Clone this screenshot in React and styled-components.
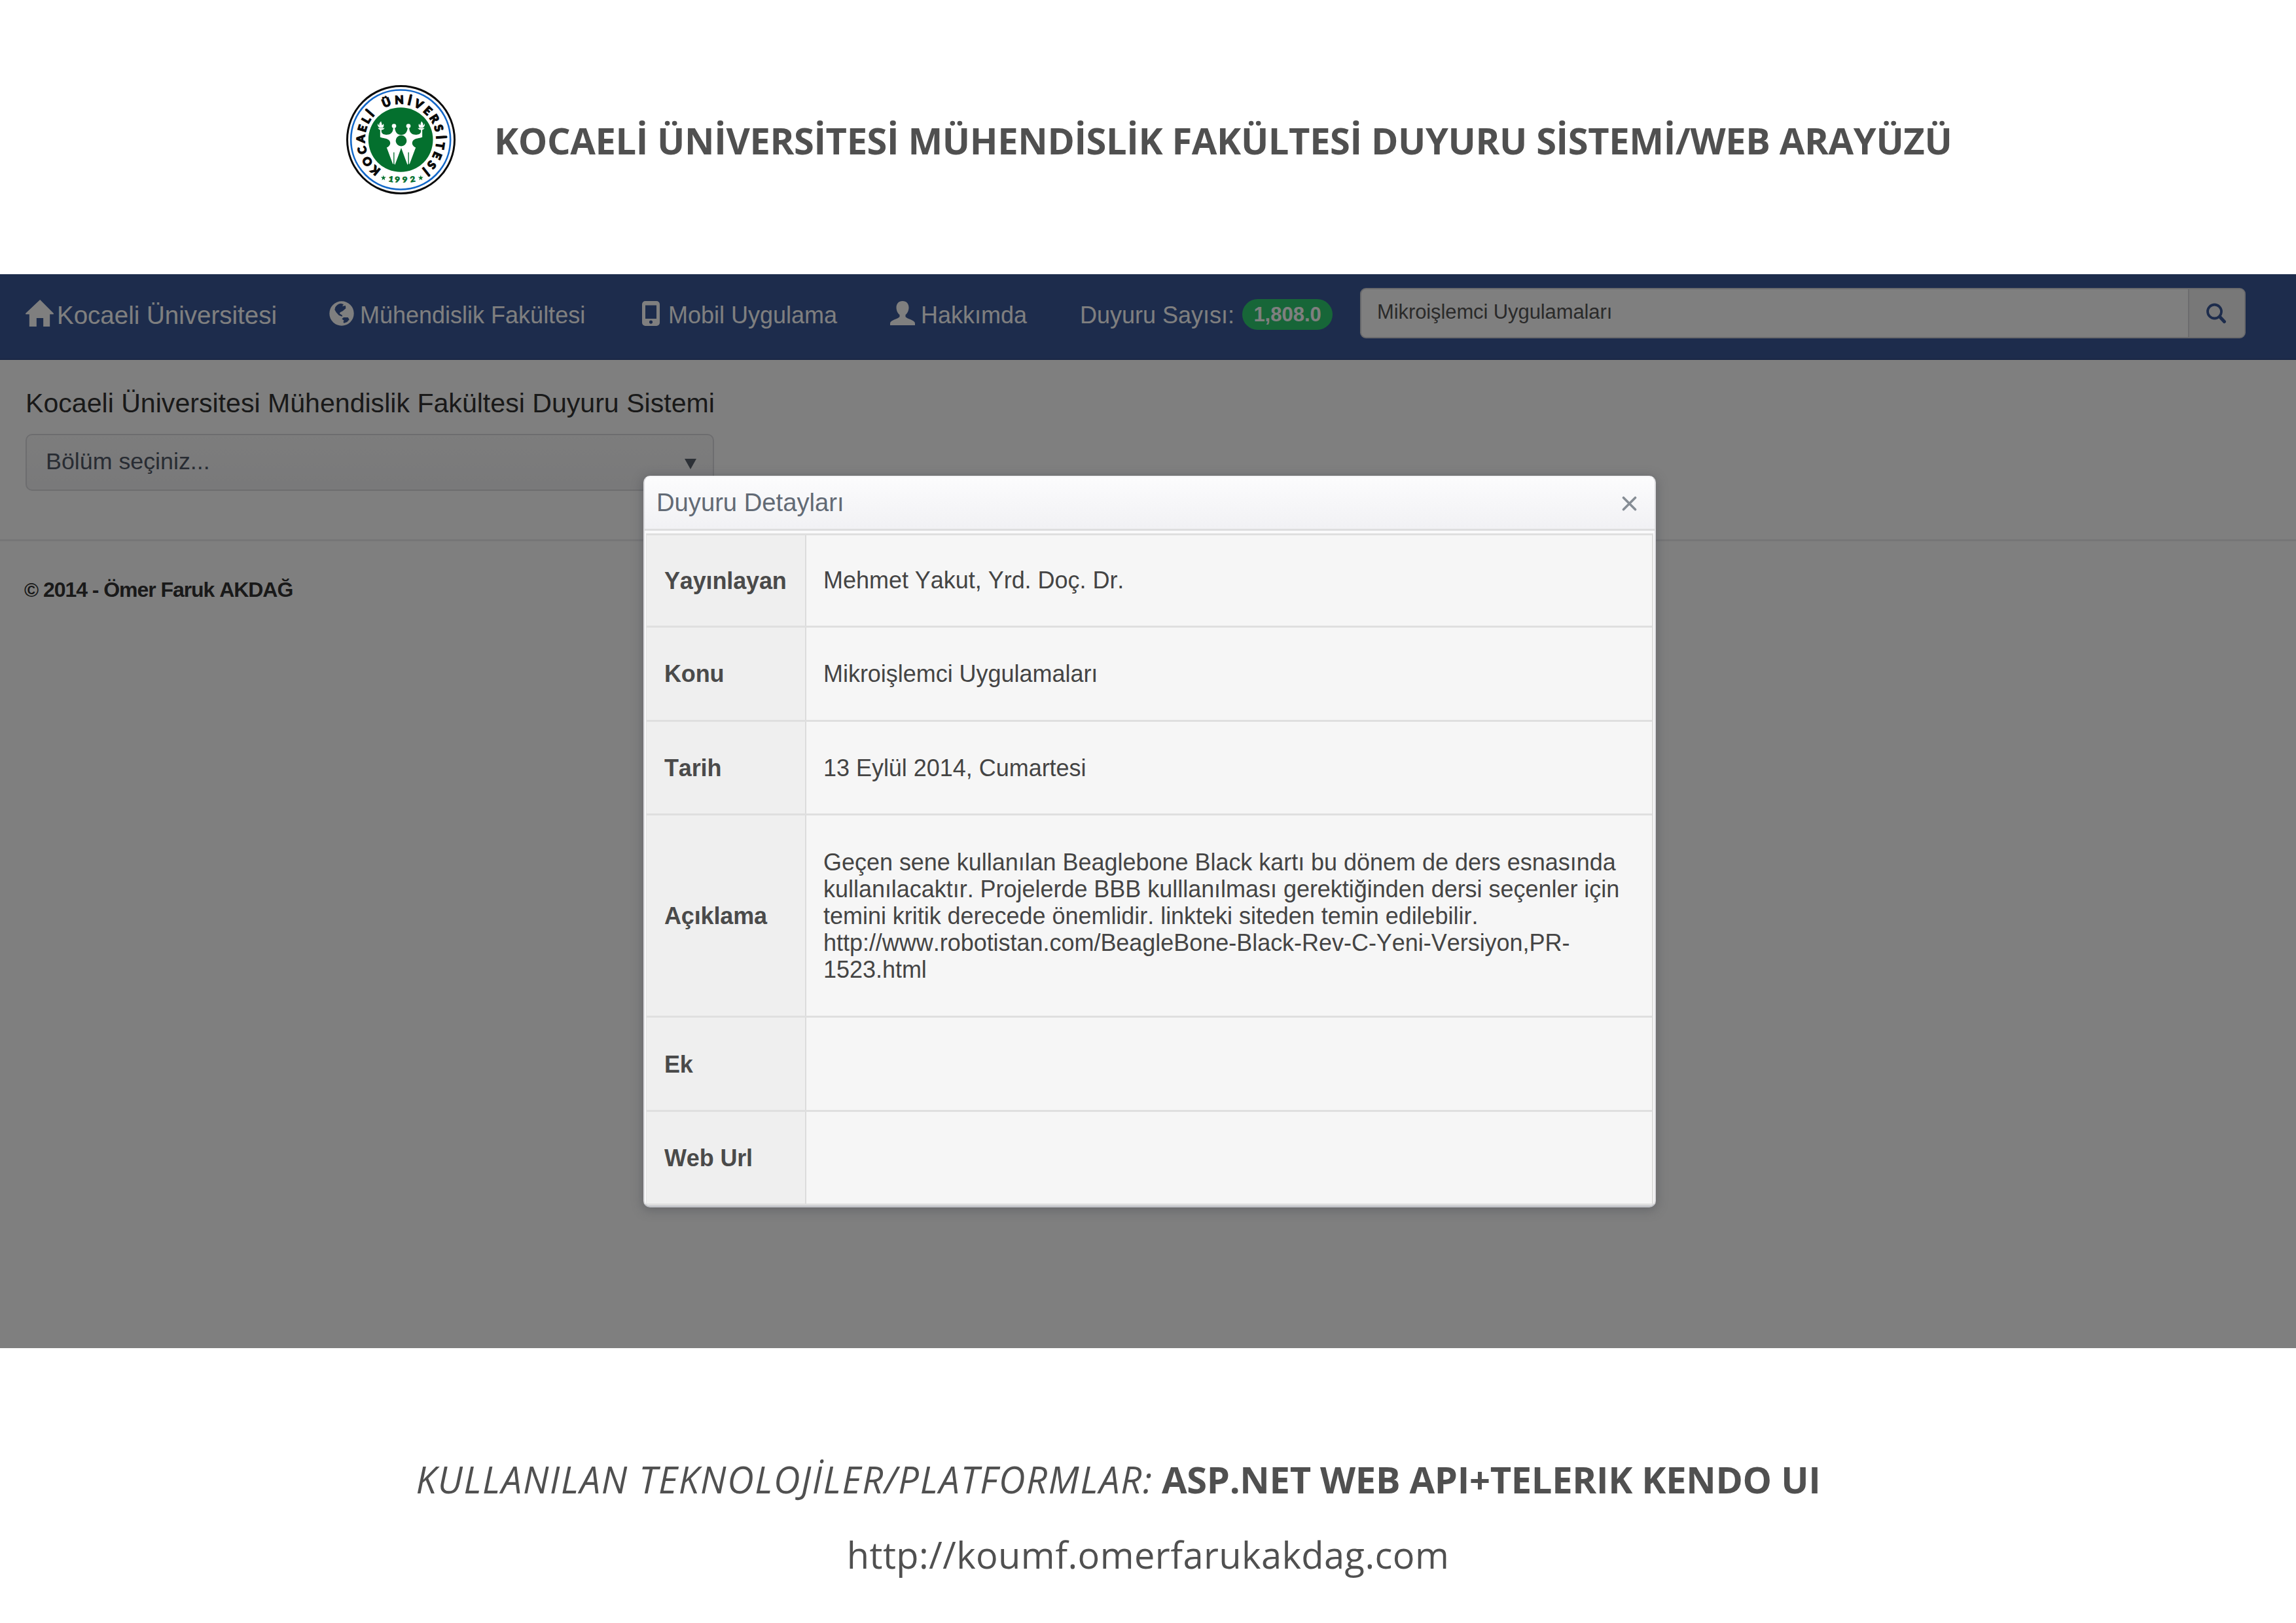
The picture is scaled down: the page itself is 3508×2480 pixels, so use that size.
import React from 'react';
import styled, { createGlobalStyle } from 'styled-components';

const GlobalStyle = createGlobalStyle`
  *, *::before, *::after { box-sizing: border-box; }
  body {
    margin: 0;
    background: #fff;
    font-family: "Liberation Sans", Arial, sans-serif;
    font-kerning: none;
    color: #333;
  }
  svg { display: block; flex: none; }
`;

const Page = styled.div`
  display: flex;
  flex-direction: column;
  width: 3508px;
  height: 2480px;
  overflow: hidden;
`;

/* Poster heading */
const Masthead = styled.header`
  display: flex;
  align-items: flex-start;
  gap: 59px;
  height: 419px;
  padding: 130px 0 0 529px;
`;

const MastheadTitle = styled.h1`
  margin: 0;
  font: 700 56px/168px "Open Sans", sans-serif;
  font-kerning: none;
  letter-spacing: -0.38px;
  white-space: nowrap;
  color: #505050;
`;

/* Application screen */
const Screen = styled.main`
  position: relative;
  display: flex;
  flex-direction: column;
  height: 1641px;
  background: #fff;
`;

const Navbar = styled.nav`
  display: grid;
  grid-template-columns: 464px 478px 379px 290px 428px 1353px;
  align-items: start;
  height: 131px;
  padding-left: 39px;
  background: #3b5998;
  border-bottom: 2px solid #34508a;
`;

const NavItem = styled.a`
  display: flex;
  align-items: center;
  gap: ${(p) => p.$gap || 13}px;
  height: 125px;
  font-size: ${(p) => (p.$brand ? 38.5 : 36)}px;
  white-space: nowrap;
  color: #fff;

  svg { margin-bottom: 6px; }
`;

const Badge = styled.span`
  display: flex;
  align-items: center;
  justify-content: center;
  width: 138px;
  height: 47px;
  margin-bottom: 2px;
  border-radius: 24px;
  background: #2ecc71;
  font-size: 31px;
  font-weight: 700;
`;

const SearchBox = styled.div`
  display: flex;
  height: 77px;
  margin-top: 20.5px;
  border: 2px solid #d5d5d8;
  border-radius: 9px;
  overflow: hidden;
  background: #fff;
`;

const SearchText = styled.div`
  flex: 1;
  padding-left: 24px;
  font-size: 31px;
  line-height: 69px;
  letter-spacing: -0.1px;
  color: #555;
`;

const SearchButton = styled.div`
  display: flex;
  align-items: center;
  width: 86px;
  padding-left: 25px;
  border-left: 2px solid #d9d9dc;
  background: #f0f0f1;
`;

const Content = styled.section`
  display: flex;
  flex-direction: column;
  height: 277px;
  padding: 41px 0 0 39px;
  border-bottom: 3px solid #ececee;
`;

const Heading = styled.h2`
  margin: 0 0 22px;
  font-size: 41.1px;
  font-weight: 400;
  line-height: 50px;
  white-space: nowrap;
`;

const Select = styled.div`
  display: flex;
  align-items: center;
  justify-content: space-between;
  width: 1052px;
  height: 87px;
  padding: 0 25px 3px 29px;
  border: 2.5px solid #dbdbde;
  border-radius: 10px;
  background: linear-gradient(#fafafa, #f2f2f4);
  font-size: 35.8px;
  color: #515967;

  svg { margin-top: 7px; }
`;

const Copyright = styled.footer`
  margin-top: 54px;
  padding-left: 37px;
  font-size: 32px;
  font-weight: 700;
  line-height: 40px;
  letter-spacing: -1.05px;

  span { font-size: 30px; }
`;

const Overlay = styled.div`
  position: absolute;
  inset: 0;
  background: rgba(0, 0, 0, 0.5);
`;

/* Dialog */
const Dialog = styled.div`
  position: absolute;
  left: 983px;
  top: 308px;
  width: 1547px;
  height: 1118px;
  display: flex;
  flex-direction: column;
  border: 2.5px solid #dbdbde;
  border-top-color: #f4f4f6;
  border-bottom: 3px solid #c3c5ca;
  border-radius: 10px;
  background: #fafafb;
  box-shadow: 0 3px 16px 2px rgba(60, 64, 72, 0.35);
  overflow: hidden;
`;

const DialogTitle = styled.div`
  display: flex;
  align-items: center;
  justify-content: space-between;
  height: 82px;
  padding: 0 27px 0 18px;
  border-bottom: 3px solid #dededf;
  background: linear-gradient(#fcfcfd, #f1f1f4);
  font-size: 38.2px;
  color: #626a75;

  svg { margin-top: 3px; }
`;

const Details = styled.div`
  flex: 1;
  display: grid;
  grid-template-rows: 141px 144px 143.500px 309px 143.500px 143.500px;
  margin: 4px 2px 0;
  border-top: 3px solid #dfdfdf;
  border-left: 1px solid #e2e2e2;
  border-right: 2px solid #dcdcdc;
  background: #f6f6f6;
`;

const Row = styled.div`
  display: grid;
  grid-template-columns: 244px 1fr;
  border-bottom: 3px solid #dfdfdf;
  font-size: 36px;
  line-height: 41.1px;
  color: #4a4a4a;
`;

const Label = styled.div`
  display: flex;
  align-items: center;
  padding: 2px 0 0 27px;
  border-right: 2.5px solid #dcdcdc;
  background: #efefef;
  font-weight: 700;
  letter-spacing: -0.15px;
`;

const Value = styled.div`
  display: flex;
  align-items: center;
  padding: 1px 0 0 26px;
  white-space: nowrap;
  letter-spacing: -0.03px;
  color: #444;
`;

/* Poster footer */
const Credits = styled.div`
  display: flex;
  flex-direction: column;
  align-items: center;
  padding-top: 143px;
  font: 400 56px/115px "Open Sans", sans-serif;
  font-kerning: none;
  white-space: nowrap;
  color: #505050;
`;

const Platforms = styled.div`
  display: flex;
  gap: 13px;
  padding-right: 91px;

  em { letter-spacing: 1.78px; }
  strong { letter-spacing: -0.3px; }
`;

const Url = styled.div`
  letter-spacing: 0.43px;
`;

const RING = [
  ['K', -140.6], ['O', -123], ['C', -105.5], ['A', -88.5], ['E', -73.5], ['L', -60], ['İ', -49],
  ['Ü', -21], ['N', -2], ['İ', 13], ['V', 27], ['E', 43], ['R', 58], ['S', 73],
  ['İ', 86.5], ['T', 98.5], ['E', 113.5], ['S', 129], ['İ', 141.5],
];

const YEAR = [['1', 290, 9], ['9', 320, 3], ['9', 356, -3], ['2', 393, -9]];

const HALF =
  'M242 261H248V274C251 284 262 287 275 286C292 284 301 274 302 254H309C311 276 322 287 339 287V345L310 424L307 420V367H303V420L300 420L272 345C290 338 293 320 281 310C271 302 258 303 242 297Z';
const FLAME =
  'M246 224C238 232 236 238 239 244C234 242 233 239 232 234C228 245 234 251 240 254H254C260 249 260 241 256 235C256 240 253 242 250 242C251 236 247 230 246 224ZM231 256H263L255 263H239Z';
const STAR = 'M0-12L3-4H12L5 2L7 11L0 5L-7 11L-5 2L-12-4H-3Z';

function Figure() {
  return (
    <g fill="#fff">
      <circle cx="305.5" cy="246" r="10" />
      <path d={HALF} />
      <path d={FLAME} />
    </g>
  );
}

function Logo() {
  return (
    <svg width="167" height="167" viewBox="86.5 58.5 501 501">
      <circle cx="337" cy="309" r="246" fill="#fff" stroke="#0a0a0a" strokeWidth="9" />
      <circle cx="336" cy="309" r="228" fill="none" stroke="#1368c9" strokeWidth="8" />
      <circle cx="336" cy="309" r="148" fill="#04702e" />
      <Figure />
      <g transform="translate(677 0) scale(-1 1)">
        <Figure />
      </g>
      <circle cx="338.5" cy="314" r="25" fill="#04702e" />
      <g fontFamily="Lato, sans-serif" fontWeight="900" fontSize="52" textAnchor="middle" fill="#0a0a0a" stroke="#0a0a0a" strokeWidth="4">
        {RING.map(([c, a], i) => (
          <text key={i} transform={`translate(336 309) rotate(${a})`} y="-164">{c}</text>
        ))}
      </g>
      <g fontFamily="Lato, sans-serif" fontWeight="900" fontSize="35" textAnchor="middle" fill="#04702e" stroke="#04702e" strokeWidth="2">
        {YEAR.map(([c, x, a], i) => (
          <text key={i} transform={`translate(${x} ${505 - Math.abs(a) * 0.3}) rotate(${a}) scale(1.15 1)`}>{c}</text>
        ))}
      </g>
      <path d={STAR} fill="#04702e" transform="translate(257 484)" />
      <path d={STAR} fill="#04702e" transform="translate(428 484)" />
    </svg>
  );
}

const HomeIcon = () => (
  <svg width="43" height="41" viewBox="25 45 128 123" fill="#fff">
    <path d="M91 45L153 107V112H136V168H106V129H75V168H42V112H25V107Z" />
  </svg>
);

const GlobeIcon = () => (
  <svg width="38" height="38" viewBox="1418 56 114 114">
    <circle cx="1475" cy="113" r="56" fill="#fff" />
    <path
      fill="#3b5998"
      d="M1446 84C1452 74 1460 68 1472 67L1484 71L1478 80L1493 77L1494 90L1480 102L1468 108L1466 114L1478 121L1477 127L1462 121L1450 108L1443 96ZM1484 131L1504 131L1510 141L1500 152L1486 157L1482 152L1486 146L1476 138Z"
    />
  </svg>
);

const PhoneIcon = () => (
  <svg width="27" height="38" viewBox="0 0 27 38">
    <path
      fill="#fff"
      fillRule="evenodd"
      d="M5 0H22A5 5 0 0 1 27 5V33A5 5 0 0 1 22 38H5A5 5 0 0 1 0 33V5A5 5 0 0 1 5 0ZM5 6.5V27H22V6.5ZM13.500 29.500A2.600 2.600 0 1 0 13.500 34.700A2.600 2.600 0 1 0 13.500 29.500Z"
    />
  </svg>
);

const UserIcon = () => (
  <svg width="38" height="37" viewBox="0 0 38 37" fill="#fff">
    <path d="M19 0C13 0 9.500 4 9.500 10C9.500 15 12 19 14.500 21V24C13 27 0 29 0 34V37H38V34C38 29 25 27 23.500 24V21C26 19 28.500 15 28.500 10C28.500 4 25 0 19 0Z" />
  </svg>
);

const SearchIcon = () => (
  <svg width="32" height="33" viewBox="0 0 32 33" fill="none" stroke="#3b5998">
    <circle cx="13.500" cy="14" r="10.500" strokeWidth="3.800" />
    <path d="M21.500 22L28.500 29.500" strokeWidth="5" strokeLinecap="round" />
  </svg>
);

const ArrowIcon = () => (
  <svg width="18" height="16" viewBox="0 0 18 16" fill="#5b636e">
    <path d="M0 0H18L9 16Z" />
  </svg>
);

const CloseIcon = () => (
  <svg width="23" height="23" viewBox="0 0 23 23" stroke="#868d95" strokeWidth="3.600" strokeLinecap="round">
    <path d="M2.500 2.500L20.500 20.500M20.500 2.500L2.500 20.500" />
  </svg>
);

const ROWS = [
  ['Yayınlayan', 'Mehmet Yakut, Yrd. Doç. Dr.'],
  ['Konu', 'Mikroişlemci Uygulamaları'],
  ['Tarih', '13 Eylül 2014, Cumartesi'],
  [
    'Açıklama',
    <span key="text">
      Geçen sene kullanılan Beaglebone Black kartı bu dönem de ders esnasında
      <br />
      kullanılacaktır. Projelerde BBB kulllanılması gerektiğinden dersi seçenler için
      <br />
      temini kritik derecede önemlidir. linkteki siteden temin edilebilir.
      <br />
      http://www.robotistan.com/BeagleBone-Black-Rev-C-Yeni-Versiyon,PR-
      <br />
      1523.html
    </span>,
  ],
  ['Ek', ''],
  ['Web Url', ''],
];

export default function App() {
  return (
    <Page>
      <GlobalStyle />
      <Masthead>
        <Logo />
        <MastheadTitle>KOCAELİ ÜNİVERSİTESİ MÜHENDİSLİK FAKÜLTESİ DUYURU SİSTEMİ/WEB ARAYÜZÜ</MastheadTitle>
      </Masthead>

      <Screen>
        <Navbar>
          <NavItem $brand $gap={5}><HomeIcon />Kocaeli Üniversitesi</NavItem>
          <NavItem $gap={9}><GlobeIcon />Mühendislik Fakültesi</NavItem>
          <NavItem><PhoneIcon />Mobil Uygulama</NavItem>
          <NavItem $gap={9}><UserIcon />Hakkımda</NavItem>
          <NavItem $gap={12}>Duyuru Sayısı: <Badge>1,808.0</Badge></NavItem>
          <SearchBox>
            <SearchText>Mikroişlemci Uygulamaları</SearchText>
            <SearchButton><SearchIcon /></SearchButton>
          </SearchBox>
        </Navbar>

        <Content>
          <Heading>Kocaeli Üniversitesi Mühendislik Fakültesi Duyuru Sistemi</Heading>
          <Select>Bölüm seçiniz...<ArrowIcon /></Select>
        </Content>
        <Copyright><span>©</span> 2014 - Ömer Faruk AKDAĞ</Copyright>

        <Overlay />
        <Dialog>
          <DialogTitle>Duyuru Detayları<CloseIcon /></DialogTitle>
          <Details>
            {ROWS.map(([label, value]) => (
              <Row key={label}>
                <Label>{label}</Label>
                <Value>{value}</Value>
              </Row>
            ))}
          </Details>
        </Dialog>
      </Screen>

      <Credits>
        <Platforms>
          <em>KULLANILAN TEKNOLOJİLER/PLATFORMLAR:</em>
          <strong>ASP.NET WEB API+TELERIK KENDO UI</strong>
        </Platforms>
        <Url>http://koumf.omerfarukakdag.com</Url>
      </Credits>
    </Page>
  );
}
